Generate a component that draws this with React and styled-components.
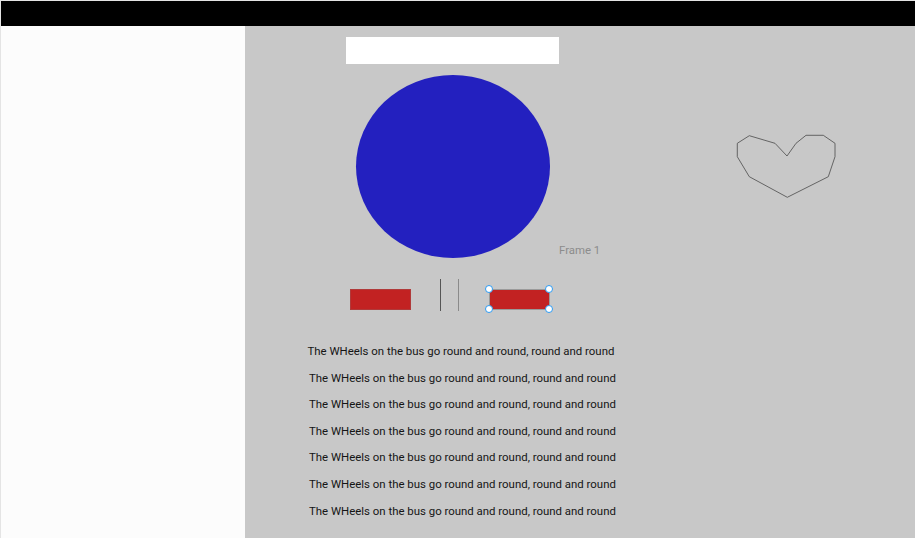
import React from "react";
import styled, { createGlobalStyle } from "styled-components";

const Global = createGlobalStyle`
  html, body { margin: 0; padding: 0; background: #e4e4e4; overflow: hidden; }
  body { font-family: Roboto, "Liberation Sans", sans-serif; }
`;

const Shell = styled.div`
  width: 915px;
  height: 538px;
  box-sizing: border-box;
  padding: 1px 0 0 1px;
  display: flex;
  flex-direction: column;
  background: #e4e4e4;
`;

const TopBar = styled.div`
  height: 25px;
  flex: none;
  background: #000;
`;

const Body = styled.div`
  flex: 1;
  display: flex;
  min-height: 0;
`;

const Sidebar = styled.aside`
  width: 244px;
  flex: none;
  background: #fcfcfc;
`;

const Canvas = styled.main`
  flex: 1;
  position: relative;
  background: #c8c8c8;
  overflow: hidden;
`;

const Item = styled.div`
  position: absolute;
  left: ${(p) => p.x}px;
  top: ${(p) => p.y}px;
  width: ${(p) => p.w}px;
  height: ${(p) => p.h}px;
  box-sizing: border-box;
`;

const WhiteBox = styled(Item)`
  background: #ffffff;
`;

const Ellipse = styled(Item)`
  background: #2320bf;
  border-radius: 50%;
`;

const FrameLabel = styled.div`
  position: absolute;
  left: 314px;
  top: 217.5px;
  font-size: 11.4px;
  line-height: 13px;
  color: #8c8c8c;
  white-space: nowrap;
`;

const RedRect = styled(Item)`
  background: #c22222;
  border: 1px solid ${(p) => (p.selected ? "#9a9a9a" : "#b03a3a")};
`;

const VLine = styled(Item)`
  background: ${(p) => p.c};
`;

const Handle = styled.div`
  position: absolute;
  left: ${(p) => p.x - 4}px;
  top: ${(p) => p.y - 4}px;
  width: 8px;
  height: 8px;
  box-sizing: border-box;
  border-radius: 50%;
  background: #fff;
  border: 1.5px solid #2b9af3;
`;

const HeartSvg = styled.svg`
  position: absolute;
  left: 491px;
  top: 108px;
  overflow: visible;
`;

const TextColumn = styled.div`
  position: absolute;
  left: 64px;
  top: 318px;
  display: flex;
  flex-direction: column;
  gap: 12.6px;
`;

const Line = styled.div`
  font-size: 11.42px;
  line-height: 14px;
  color: #151515;
  white-space: nowrap;
  margin-left: ${(p) => p.shift || 0}px;
`;

const TEXT = "The WHeels on the bus go round and round, round and round";

export default function App() {
  const handles = [
    [243.5, 262.5],
    [304.3, 262.5],
    [243.5, 283],
    [304.3, 283],
  ];
  return (
    <>
      <Global />
      <Shell>
        <TopBar />
        <Body>
          <Sidebar />
          <Canvas>
            <WhiteBox x={101} y={11} w={213} h={27} />
            <Ellipse x={111} y={49} w={194} h={183} />
            <FrameLabel>Frame 1</FrameLabel>
            <RedRect x={105} y={263} w={61} h={21} />
            <VLine x={195} y={253} w={1} h={32} c="#555" />
            <VLine x={213} y={253} w={1} h={32} c="#8a8a8a" />
            <RedRect selected x={243.5} y={262.5} w={61} h={21} />
            {handles.map(([x, y], i) => (
              <Handle key={i} x={x} y={y} />
            ))}
            <HeartSvg width="102" height="66" viewBox="736 134 102 66">
              <polygon
                points="749.3,135.7 775,143.3 787,156 796,143.3 806,135.3 823.3,135.3 835,143.3 835,156.7 828.3,176.7 787.3,197.3 749.3,176.7 737.3,156.7 737.3,143.3"
                fill="none"
                stroke="#4a4a4a"
                strokeWidth="0.8"
              />
            </HeartSvg>
            <TextColumn>
              {Array.from({ length: 7 }).map((_, i) => (
                <Line key={i} shift={i === 0 ? -1.5 : 0}>
                  {TEXT}
                </Line>
              ))}
            </TextColumn>
          </Canvas>
        </Body>
      </Shell>
    </>
  );
}
